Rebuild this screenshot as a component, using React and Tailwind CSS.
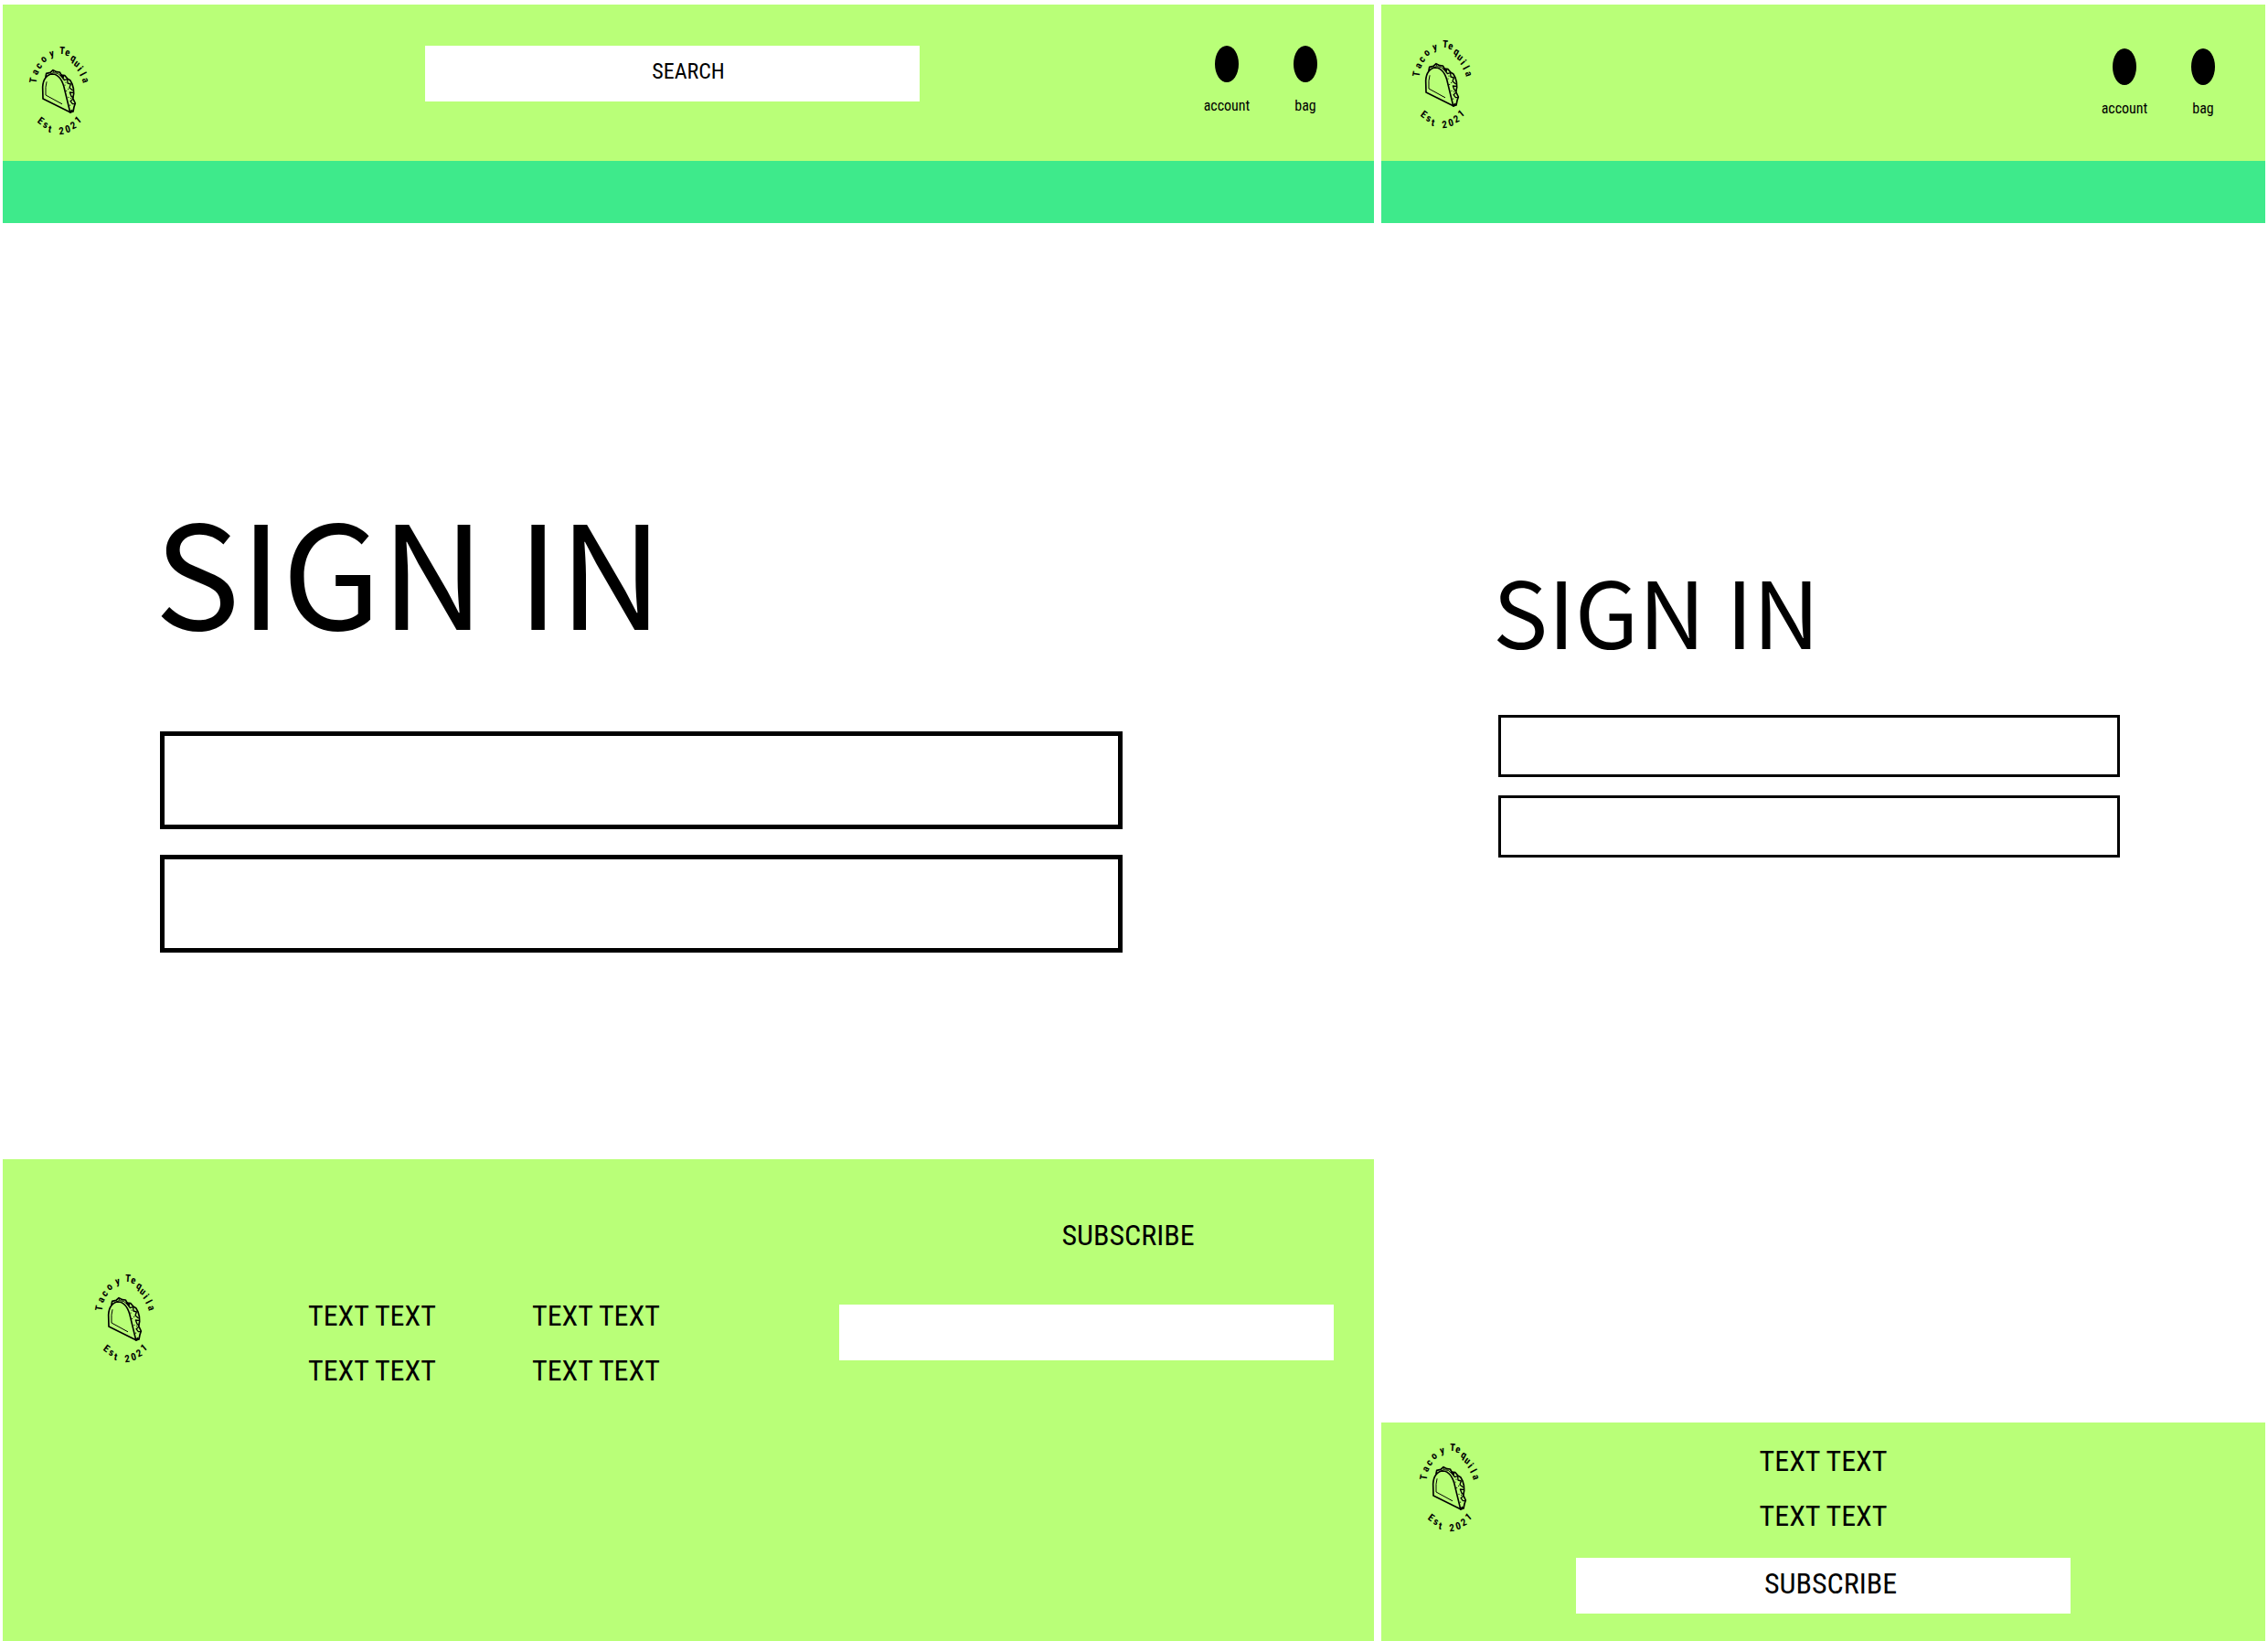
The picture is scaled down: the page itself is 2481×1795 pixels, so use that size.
import React from "react";

const RING_TOP = [
  ["T", 36, 68, -80], ["a", 39, 59, -62], ["c", 43, 52, -50], ["o", 48, 45, -36], [" ", 52, 40, -24],
  ["y", 57, 39, -14], [" ", 61, 36, 0],
  ["T", 68, 35, 4], ["e", 74, 38, 14], ["q", 80, 44, 28], ["u", 84, 50, 38], ["i", 88, 55, 50], ["l", 91, 61, 62], ["a", 93, 68, 74],
];
const RING_BOTTOM = [
  ["E", 45, 112, 36], ["s", 50, 117, 22], ["t", 55, 121, 10], [" ", 60, 123, 0],
  ["2", 67, 123, -6], ["0", 74, 121, -16], ["2", 80, 117, -26], ["1", 85, 111, -40],
];
const GLYPH_WIDTH = { T: 6, E: 6, i: 3, l: 3, t: 4 };

function RingText({ glyphs }) {
  const placed = glyphs.map(([ch, cx, cy, deg]) => {
    const a = (deg * Math.PI) / 180;
    const w = (GLYPH_WIDTH[ch] || 5.5) / 2;
    const h = "TElit2013".includes(ch) ? 4 : 3;
    return {
      x: cx - w * Math.cos(a) - h * Math.sin(a),
      y: cy - w * Math.sin(a) + h * Math.cos(a),
      deg,
    };
  });
  return (
    <text
      x={placed.map((p) => p.x.toFixed(1)).join(" ")}
      y={placed.map((p) => p.y.toFixed(1)).join(" ")}
      rotate={placed.map((p) => p.deg).join(" ")}
      className="text-[11px] font-bold"
    >
      {glyphs.map((g) => g[0]).join("")}
    </text>
  );
}

function Logo() {
  return (
    <svg viewBox="30 28 70 104" className="h-[104px] w-[70px] shrink-0 overflow-visible" role="img" aria-label="Taco y Tequila, Est 2021">
      <RingText glyphs={RING_TOP} />
      <RingText glyphs={RING_BOTTOM} />
      <g transform="scale(0.333333)" fill="none" stroke="#000" strokeWidth="5" strokeLinejoin="round" strokeLinecap="round">
        <path d="M141 264 L140 226 C141 200 154 184 172 183 C196 184 207 208 213 238 L230 308 Z" />
        <path strokeWidth="3" d="M153 209 L150 226 L150 252 L203 281" />
        <path d="M150 192 L152 181 L165 178 L174 170 L186 176 L196 177 L201 186 L213 188 L222 199 L230 203 L237 216 L241 230 L242 248 L239 262 L247 279 L243 291 L240 306 L230 309" />
        <path strokeWidth="3" d="M157 188 L165 183 L175 179 L190 181 L200 190 L208 200" />
        <path strokeWidth="4" d="M203 190 L211 203 L221 200 L222 213 L232 216 L228 228 L238 236 M239 244 L229 243 L234 256 L240 260 M238 266 L231 272 L238 281 L244 281" />
        <path strokeWidth="7" d="M201 187 L207 192 M236 303 L232 307" />
        <path strokeWidth="3" d="M213 219 V220 M218 238 V239 M224 232 V233 M225 259 V260 M230 285 V286 M233 262 V263 M175 175 V176 M216 210 V211" />
      </g>
    </svg>
  );
}

function HeaderLinks({ className }) {
  return (
    <nav className={`flex justify-end ${className}`}>
      {["account", "bag"].map((name) => (
        <a key={name} href={`#${name}`} className="flex w-[86px] flex-col items-center gap-3">
          <span className="h-10 w-[26px] rounded-[50%] bg-black" />
          <span className="text-base leading-7">{name}</span>
        </a>
      ))}
    </nav>
  );
}

function TextLinks() {
  return (
    <ul className="flex flex-col gap-1 text-[32px] leading-[56px]">
      <li><a href="#text">TEXT TEXT</a></li>
      <li><a href="#text">TEXT TEXT</a></li>
    </ul>
  );
}

const heading = "-ml-1.5 font-['Noto_Sans_CJK_JP',sans-serif] leading-none";

function DesktopPage() {
  return (
    <section className="flex flex-col">
      <header>
        <div className="grid h-[171px] grid-cols-[462fr_541fr_497fr] bg-[#b9ff78]">
          <div className="pt-[43px] pl-[27px]"><Logo /></div>
          <div className="pt-[45px]">
            <input
              type="search"
              aria-label="Search"
              placeholder="SEARCH"
              className="h-[61px] w-full bg-white pb-1.5 pl-14 text-center text-2xl outline-none placeholder:text-black placeholder:opacity-100"
            />
          </div>
          <HeaderLinks className="pt-[45px] pr-8" />
        </div>
        <div className="h-[68px] bg-[#3eea8b]" />
      </header>
      <main className="flex-1 pt-[298px] pl-[172px]">
        <h1 className={`text-[157px] ${heading}`}>SIGN IN</h1>
        <form className="mt-[101px] flex w-[79.3%] flex-col gap-7">
          <input type="email" aria-label="Email" className="h-[107px] border-5 border-black bg-white px-6 text-4xl outline-none" />
          <input type="password" aria-label="Password" className="h-[107px] border-5 border-black bg-white px-6 text-4xl outline-none" />
        </form>
      </main>
      <footer className="grid h-[527px] grid-cols-[334fr_245fr_336fr_541fr_44fr] bg-[#b9ff78]">
        <div className="pt-[123px] pl-[99px]"><Logo /></div>
        <div className="pt-[143px]"><TextLinks /></div>
        <div className="pt-[143px]"><TextLinks /></div>
        <form className="flex flex-col gap-12 pt-[55px]">
          <label htmlFor="subscribe" className="pl-[91px] text-center text-[32px] leading-[56px]">SUBSCRIBE</label>
          <input id="subscribe" type="email" className="h-[61px] w-full bg-white px-4 text-2xl outline-none" />
        </form>
      </footer>
    </section>
  );
}

function MobilePage() {
  return (
    <section className="flex flex-col">
      <header>
        <div className="flex h-[171px] justify-between bg-[#b9ff78]">
          <div className="pt-9 pl-8"><Logo /></div>
          <HeaderLinks className="pt-12 pr-[25px]" />
        </div>
        <div className="h-[68px] bg-[#3eea8b]" />
      </header>
      <main className="flex-1 pt-[372px] pl-32">
        <h1 className={`text-[101px] ${heading}`}>SIGN IN</h1>
        <form className="mt-[65px] flex w-[81%] flex-col gap-5">
          <input type="email" aria-label="Email" className="h-[68px] border-3 border-black bg-white px-4 text-2xl outline-none" />
          <input type="password" aria-label="Password" className="h-[68px] border-3 border-black bg-white px-4 text-2xl outline-none" />
        </form>
      </main>
      <footer className="grid h-[239px] grid-cols-[213fr_541fr_213fr] bg-[#b9ff78]">
        <div className="pt-5 pl-10"><Logo /></div>
        <div className="flex flex-col items-center gap-[18px] pt-3.5">
          <TextLinks />
          <button type="button" className="h-[61px] w-full bg-white pb-1.5 pl-4 text-[32px]">SUBSCRIBE</button>
        </div>
      </footer>
    </section>
  );
}

export default function App() {
  return (
    <div className="grid min-h-screen grid-cols-[1500fr_967fr] gap-2 bg-white pt-[5px] pr-[3px] pl-[3px] font-['Roboto_Condensed','Roboto',sans-serif] text-black">
      <DesktopPage />
      <MobilePage />
    </div>
  );
}
